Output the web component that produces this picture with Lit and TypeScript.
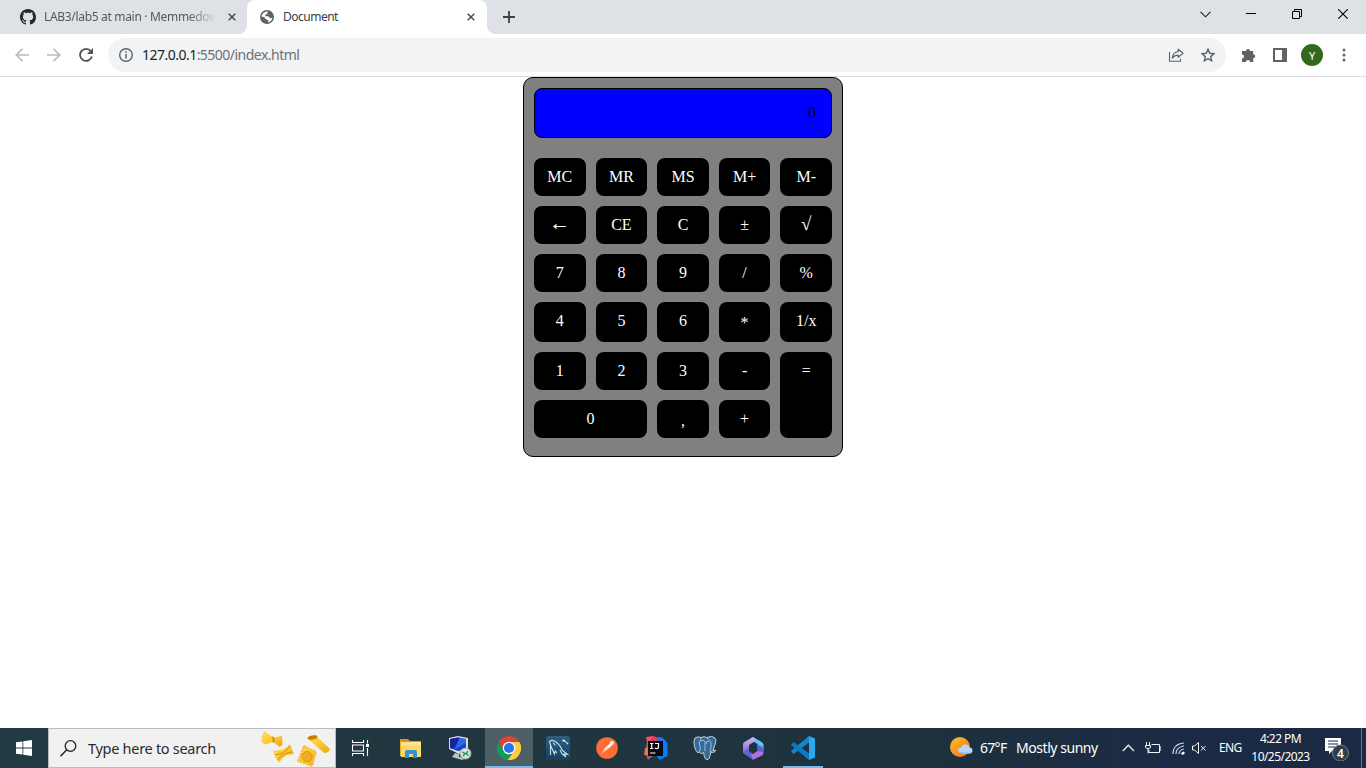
import { LitElement, html, css, svg } from "lit";
import { customElement } from "lit/decorators.js";
import { classMap } from "lit/directives/class-map.js";

const icon = (w: number, h: number, body: unknown) =>
  html`<svg width=${w} height=${h} viewBox="0 0 ${w} ${h}">${body}</svg>`;

const close = icon(8, 8, svg`<path d="M.7.7 7.3 7.3M7.3.7.7 7.3" stroke="#45494d" stroke-width="1.5"/>`);

const github = html`<svg width="16" height="16" viewBox="0 0 16 16"><path fill="#24292f" d="M8 0C3.58 0 0 3.58 0 8c0 3.54 2.29 6.53 5.47 7.59.4.07.55-.17.55-.38 0-.19-.01-.82-.01-1.49-2.01.37-2.53-.49-2.69-.94-.09-.23-.48-.94-.82-1.13-.28-.15-.68-.52-.01-.53.63-.01 1.08.58 1.23.82.72 1.21 1.87.87 2.33.66.07-.52.28-.87.51-1.07-1.78-.2-3.64-.89-3.64-3.95 0-.87.31-1.59.82-2.15-.08-.2-.36-1.02.08-2.12 0 0 .67-.21 2.2.82.64-.18 1.32-.27 2-.27s1.36.09 2 .27c1.53-1.04 2.2-.82 2.2-.82.44 1.1.16 1.92.08 2.12.51.56.82 1.27.82 2.15 0 3.07-1.87 3.75-3.65 3.95.29.25.54.73.54 1.48 0 1.07-.01 1.93-.01 2.2 0 .21.15.46.55.38A8.01 8.01 0 0 0 16 8c0-4.42-3.58-8-8-8z"/></svg>`;

const globe = icon(14, 14, svg`<circle cx="7" cy="7" r="7" fill="#5f6368"/>
  <path d="M8.200 1.500C6.400 2.500 8.300 3.600 6.700 4.300 5.200 4.900 5 4.800 5.300 6.200c1.900.2 3.800-.3 4.200 1.300.2 1.100 1.800.5 2.900.3-.3 2-1.800 4.200-4.200 4.700-.2-1.300.7-2.100-.6-2.700-1.700-.6-2.700-.5-2.800-2C4.700 7 3 6.700 1.500 6.500 1.800 3.900 4.500 1.200 8.200 1.500Z" fill="#fff"/>`);

const chrome = html`<svg width="24" height="24" viewBox="0 0 24 24">
  <path fill="#db4437" d="M12 0a12 12 0 0 1 10.400 6H12a6 6 0 0 0-5.200 9L1.600 6A12 12 0 0 1 12 0Z"/>
  <path fill="#0f9d58" d="M1.600 6 6.800 15a6 6 0 0 0 5.200 3 6 6 0 0 0 2-.3L10.600 24A12 12 0 0 1 1.600 6Z"/>
  <path fill="#ffcd40" d="M22.400 6a12 12 0 0 1-11.800 18l6.600-9A6 6 0 0 0 12 6Z"/>
  <circle cx="12" cy="12" r="6.300" fill="#fff"/><circle cx="12" cy="12" r="5.100" fill="#2b72e8"/></svg>`;

const explorer = icon(22, 19, svg`<path d="M0 0h8l2 2h11v3H0Z" fill="#d9941a"/><path d="M1 3h20v15H1Z" fill="#ffd968"/>
  <path d="M1 3h20v3H1Z" fill="#ffe391"/><path d="M5 19v-6q0-2 2-2h8q2 0 2 2v6h-4v-4H9v4Z" fill="#3390d9"/><path d="M0 2h1v15H0Z" fill="#e5ac34"/>`);

const remote = icon(24, 26, svg`<path d="m1 3 9-2 10 2v13l-9 3L1 14Z" fill="#d8e1e9"/><path d="m2 4 8-1.500 8 1.500v10l-8 2-8-3Z" fill="#1542cc"/>
  <path d="m2 4 8-1.500 3 .5L5 14l-3-1Z" fill="#17259f"/><path d="m11 3 7 1v4L7 14Z" fill="#3b7bed" opacity=".7"/>
  <path d="m7 18 4 1v3l7 1-4 2-10-3Z" fill="#b9c1c8"/><circle cx="17.500" cy="18.500" r="5.500" fill="#d9dfdc" stroke="#9da5a6"/>
  <path d="m14.500 17 2.500 1.700-2 2.500M20.500 20.500l-2.500-2 2-2.300" fill="none" stroke="#20933d" stroke-width="1.300"/>`);

const mysql = icon(24, 24, svg`<defs><linearGradient id="a" y2="1" x2="0"><stop stop-color="#325d7c"/><stop offset=".5" stop-color="#1d5179"/><stop offset="1" stop-color="#154064"/></linearGradient></defs>
  <rect width="24" height="24" rx="2.500" fill="url(#a)"/><path d="M4.500 19V9L3.500 5.500Q6 3.500 8.500 5q6 4 7.500 9l5.500 4.500-3.500-.5 2 3-4-3-2-4M4.500 9q2 5 4 9l.8-3 1.700 2M7 6.500l2.500 3" fill="none" stroke="#d1dfe9" stroke-width="1.100"/>
  <path d="m16 4 2-.5 2 2 2.500 2-1 1-2-2.500-2.500-.5Z" fill="#e7edf2"/>`);

const postman = icon(22, 22, svg`<circle cx="11" cy="11" r="10.800" fill="#ff6c37"/><path d="m5 17 4-6 5-4.500 2 2-5.500 4.500Z" fill="#fff"/><circle cx="15.800" cy="6" r="2.100" fill="#fff"/><path d="m5.500 16.500 6-6" stroke="#ff9270" stroke-width=".7"/>`);

const intellij = icon(24, 24, svg`<path d="m2 1 7-1 5 3-5 7-7 2 1-6Z" fill="#fc4c60"/><path d="m9 0 6 2-5 8H3Z" fill="#e43870"/><path d="m14 1 5 1 4.500 5v13l-8 4-3-4Z" fill="#087cfa"/><path d="m15 1 4 1v7h-6Z" fill="#3e6be9"/><path d="m1 17 5-7 4 9-6 5Z" fill="#a85398"/><path d="m1 12 5-1v8H0Z" fill="#ef7446"/>
  <rect x="4" y="5" width="15" height="15" fill="#080808"/><path d="M6 7.500h3.400M7.700 7.500v5M6 12.500h3.400M11 7.500h3.500v3.700q0 1.400-1.700 1.400-1.200 0-1.700-.6M6 17h5.500" stroke="#fff" stroke-width="1.200" fill="none"/>`);

const postgres = icon(24, 25, svg`<path d="M2 2q3-2 6-.5 3-1.500 6 0 5-2.500 8 .5 2 3-1 9l-1 3.500 3-.2q-1 2.500-5.500 2.200Q17 24 14 23.500q-3 0-3.200-7-2 2.500-4.500-.2Q3 18 1.500 10 0 5 2 2Z" fill="#336b9c" stroke="#c6ced4" stroke-width="1"/>
  <path d="M8 2Q5 7 7 11q1 3-1 5M14 2q5 3 4 9l-1 4 2 1M8 5q3-2 4 1v9M16 5q-3 0-3 3" stroke="#c8d2da" stroke-width=".8" fill="none"/>`);

const office = icon(21, 23, svg`<defs><linearGradient id="b" x1="0" y1="0" x2="0" y2="1"><stop stop-color="#d6b9f6"/><stop offset="1" stop-color="#7d51c9"/></linearGradient><linearGradient id="c" x2="1" y1="1" y2="0"><stop stop-color="#4a55c8"/><stop offset=".6" stop-color="#55d1ff"/></linearGradient></defs>
  <path d="m10 0 9 5.200 1.500 2V12l-6-3V7L8 3.500Z" fill="url(#c)"/><path d="m10 0-9 5.200L0 7v9l6 3V8l7-4.500Z" fill="url(#b)"/><path d="m0 15 2 2.500 8 5.200 4-2.700-8-6v-3Z" fill="#5b64d8"/><path d="M20.500 10v6.500L19 18.500l-9 4.200-2-4.700 6.500-4V8Z" fill="#ad72df"/><path d="m14.500 8 6 3v4l-6-1Z" fill="#5960cd"/>`);

const vscode = icon(24, 24, svg`<path d="m18 0-18 15 2.500 3L18 6.500Z" fill="#1685d0"/><path d="M18 24 0 9l2.500-3L18 17.500Z" fill="#087dc6"/><path d="M18 0v24l6-2.500v-19Z" fill="#29a9ef"/>`);

const pasta = html`<svg width="72" height="38" viewBox="0 0 72 38">
  <defs><linearGradient id="p" x2="1" y2="1"><stop stop-color="#ffdd5c"/><stop offset=".55" stop-color="#fbc62f"/><stop offset="1" stop-color="#eea51c"/></linearGradient></defs>
  <path d="m4 2 8 5.500Q14 10 16 8l6-1 .5 9-3 2-6-5q-2-1-3 1l-6 1.500-3.500-3.500 2-2-2-2 2-2Z" fill="url(#p)"/><path d="m12 8q3 2 1 5.500" stroke="#d68d06" stroke-width="2" fill="none"/>
  <path d="m13 22 7-1q6-1 10-6l4 10-7 1q-4 2-8 7.500l-3-4Z" fill="url(#p)"/><path d="M15 26q10-1 15-9M18 31q4-7 14-8" stroke="#d68d06" stroke-width="1" fill="none"/>
  <path d="M48 10q1-5 8-3l14 13q-1 4-6 4Z" fill="url(#p)"/><ellipse cx="52.500" cy="8.500" rx="5" ry="2" fill="#c97a00" transform="rotate(-12 52.500 8.500)"/>
  <path d="m44 17 12 6-4 14-14-5Z" fill="url(#p)" stroke="#f6bd36" stroke-width="2" stroke-dasharray="2.500 1" stroke-linejoin="round"/><circle cx="47" cy="27.500" r="5" fill="#efae25" stroke="#d99412"/></svg>`;

const weather = icon(24, 22, svg`<defs><linearGradient id="s" x2="1" y2="1"><stop stop-color="#ffc12c"/><stop offset="1" stop-color="#f26d19"/></linearGradient></defs><circle cx="10" cy="10" r="10" fill="url(#s)"/><path d="M12 16.500q-4 0-4-3 0-2.500 3-3 2-4 5.500-3 2.500.5 3 3 3 0 3 3t-3 3Z" fill="#b9d3fa"/><path d="M12 16.500q-3 0-4-2 6 2 14 .5-1 1.500-2 1.500Z" fill="#91b7ee"/>`);

@customElement("browser-window")
class BrowserWindow extends LitElement {
  static styles = css`
    :host { display: block; font-family: "Noto Sans", sans-serif; color: #3c4043; }
    svg { display: block; flex: none; }
    .tabs { display: flex; height: 34px; background: #dee1e6; }
    .tab { display: flex; align-items: center; box-sizing: border-box; font-size: 12px; }
    .idle { width: 247px; padding-left: 20px; }
    .label { white-space: nowrap; overflow: hidden; line-height: 18px; }
    .idle .label { width: 172px; margin: 0 12px 0 8px; color: #54585d; letter-spacing: -.32px;
      -webkit-mask-image: linear-gradient(90deg, #000 84%, transparent); }
    .active { width: 240px; padding-left: 13px; background: #fff; border-radius: 8px 8px 0 0; position: relative; }
    .active::before, .active::after { content: ""; position: absolute; bottom: 0; width: 8px; height: 8px; }
    .active::before { left: -8px; background: radial-gradient(circle at 0 0, transparent 7.5px, #fff 8px); }
    .active::after { right: -8px; background: radial-gradient(circle at 100% 0, transparent 7.5px, #fff 8px); }
    .active .label { width: 160px; margin: 0 24px 0 9px; letter-spacing: -.5px; }
    .plus { display: grid; place-items: center; width: 44px; }
    .controls { display: flex; margin-left: auto; height: 28px; }
    .controls > * { width: 46px; display: grid; place-items: center; }
    .bar { display: flex; align-items: center; height: 42px; padding: 0 6px; border-bottom: 1px solid #dadce0; background: #fff; }
    .cell { width: 32px; height: 32px; display: grid; place-items: center; flex: none; }
    .omni { display: flex; align-items: center; flex: 1; height: 34px; margin: 0 6px; padding: 0 2px 0 11px; box-sizing: border-box; border-radius: 17px; background: #f1f3f4; }
    .url { flex: 1; margin-left: 9px; font-size: 14px; line-height: 20px; letter-spacing: -.52px; color: #6c7075; }
    .url b { font-weight: 400; color: #202124; }
    .avatar { width: 22px; height: 22px; border-radius: 50%; background: #33691e; color: #fff; display: grid; place-items: center; font-size: 11px; }
  `;
  render() {
    return html`
      <div class="tabs">
        <div class="tab idle">${github}<span class="label">LAB3/lab5 at main · Memmedov</span>${close}</div>
        <div class="tab active">${globe}<span class="label">Document</span>${close}</div>
        <div class="plus">${icon(12, 12, svg`<path d="M6 0v12M0 6h12" stroke="#3c4043" stroke-width="1.800"/>`)}</div>
        <div class="controls">
          <span>${icon(11, 7, svg`<path d="m.5.8 5 5 5-5" fill="none" stroke="#222" stroke-width="1.100"/>`)}</span>
          <span>${icon(10, 2, svg`<path d="M0 0h10v1H0z"/>`)}</span>
          <span>${icon(10, 10, svg`<path d="M.5 2.500h7v7h-7zM2.500 2.500v-2h7v7h-2" fill="none" stroke="#000"/>`)}</span>
          <span>${icon(10, 10, svg`<path d="m.2.2 9.600 9.600m0-9.600-9.600 9.600" stroke="#000" stroke-width="1.100"/>`)}</span>
        </div>
      </div>
      <div class="bar">
        <span class="cell">${icon(14, 14, svg`<path d="M14 7H1.500M7.500.8 1.300 7l6.200 6.200" fill="none" stroke="#b9bbbe" stroke-width="1.700"/>`)}</span>
        <span class="cell">${icon(14, 14, svg`<path d="M0 7h12.500M6.500.8 12.700 7l-6.200 6.200" fill="none" stroke="#b9bbbe" stroke-width="1.700"/>`)}</span>
        <span class="cell">${icon(14, 14, svg`<path d="M11.800 3.200A6 6 0 1 0 12.900 8.500" fill="none" stroke="#4e5256" stroke-width="1.800"/><path d="M14 0v6H8Z" fill="#4e5256"/>`)}</span>
        <div class="omni">
          ${icon(14, 14, svg`<circle cx="7" cy="7" r="6.300" fill="none" stroke="#5f6368" stroke-width="1.400"/><path d="M7 6v4.500M7 3.300v1.500" stroke="#5f6368" stroke-width="1.500"/>`)}
          <span class="url"><b>127.0.0.1</b>:5500/index.html</span>
          <span class="cell">${icon(16, 14, svg`<path d="M1.500 4v9.300h11v-2.500" fill="none" stroke="#5f6368" stroke-width="1.100"/><path d="M10.200 1.200 15 5.300l-4.800 4.100V7.200Q6.700 7 4.200 10 4.800 4.300 10.200 3.500Z" fill="none" stroke="#5f6368" stroke-width="1.200" stroke-linejoin="round"/>`)}</span>
          <span class="cell">${icon(14, 14, svg`<path d="m7 1.300 1.700 4 4.300.4-3.300 2.900 1 4.200L7 10.600l-3.700 2.200 1-4.200L1 5.700l4.300-.4Z" fill="none" stroke="#5f6368" stroke-width="1.400"/>`)}</span>
        </div>
        <span class="cell">${icon(15, 15, svg`<path d="M1.500 3H5a2 2 0 1 1 4 0h3.200v3.300a2 2 0 1 1 0 4V14H9a2 2 0 0 0-4 0H1v-3.500a2 2 0 0 0 0-4V3Z" fill="#5f6368"/>`)}</span>
        <span class="cell">${icon(14, 14, svg`<path d="M0 0h14v14H0Zm2 2v10h7V2Z" fill="#5f6368" fill-rule="evenodd"/>`)}</span>
        <span class="cell"><span class="avatar">Y</span></span>
        <span class="cell">${icon(4, 14, svg`<g fill="#5f6368"><circle cx="2" cy="2" r="1.500"/><circle cx="2" cy="7" r="1.500"/><circle cx="2" cy="12" r="1.500"/></g>`)}</span>
      </div>`;
  }
}

@customElement("calculator-pad")
class CalculatorPad extends LitElement {
  static styles = css`
    :host { display: block; width: 320px; height: 380px; box-sizing: border-box; padding: 10px; margin: 0 auto;
      border: 1px solid #000; border-radius: 10px; background: gray; font: 16px/18px "Liberation Serif", serif; }
    .display { height: 50px; box-sizing: border-box; padding: 15px 15px 0 0; margin-bottom: 20px; border: 1px solid #000;
      border-radius: 8px; background: blue; text-align: right; color: #000; }
    .keys { display: grid; grid-template-columns: repeat(5, 1fr); grid-template-rows: 38px 38px 38px 40px 38px 38px; gap: 10px; }
    .key { padding-top: 10px; border-radius: 8px; background: #000; color: #fff; text-align: center; }
    .wide { grid-column: span 2; }
    .tall { grid-row: span 2; }
    .arrow { font-size: 21px; padding-top: 8px; }
    .root { font-size: 19px; padding-top: 9px; }
    .low { padding-top: 12px; }
  `;
  keys = ["MC", "MR", "MS", "M+", "M-", "←", "CE", "C", "±", "√", "7", "8", "9", "/", "%", "4", "5", "6", "*", "1/x", "1", "2", "3", "-", "=", "0", ",", "+"];
  render() {
    return html`<div class="display">0</div>
      <div class="keys">${this.keys.map((k) => html`<div class=${classMap({ key: true, wide: k === "0", tall: k === "=", arrow: k === "←", root: k === "√", low: k === "*" || k === "," })}>${k}</div>`)}</div>`;
  }
}

@customElement("task-bar")
class TaskBar extends LitElement {
  static styles = css`
    :host { display: flex; height: 40px; color: #fff; font-family: "Noto Sans", sans-serif;
      background: linear-gradient(90deg, #223a42 0, #20363f 45%, #1d303d 70%, #1b2b45 85%, #1b2944 100%); }
    svg { display: block; flex: none; }
    .start { width: 48px; display: grid; place-items: center; }
    .search { width: 288px; box-sizing: border-box; border: 1px solid #bcbcbc; background: #f1f1f1; color: #2b2b2b; display: flex; align-items: center; padding: 0 3px 0 11px; }
    .hint { flex: 1; margin-left: 11px; font-size: 14.500px; line-height: 20px; letter-spacing: -.29px; white-space: nowrap; }
    .view { width: 48px; margin-right: 2px; display: grid; place-items: center; }
    .app { width: 49px; display: grid; place-items: center; box-sizing: border-box; }
    .current { width: 48px; margin-left: 1px; background: #4c5e66; box-shadow: inset 0 -2px #76b9ed; }
    .running { width: 40px; margin-left: 5px; box-shadow: inset 0 -2px #76b9ed; }
    .tray { display: flex; align-items: center; margin-left: auto; font-size: 14px; line-height: 20px; white-space: nowrap; }
    .temp { width: 36px; margin-left: 6px; letter-spacing: -.7px; }
    .sky { width: 106px; letter-spacing: -.45px; }
    .up { width: 23px; }
    .power { width: 27px; }
    .wifi { width: 20px; }
    .sound { width: 27px; }
    .lang { width: 24px; font-size: 12px; letter-spacing: -.6px; }
    .clock { width: 75px; margin-right: 1px; font-size: 12px; line-height: 18px; letter-spacing: -.55px; text-align: center; }
    .note { width: 42px; padding-left: 6px; box-sizing: border-box; }
    .edge { width: 1px; height: 40px; margin-right: 4px; background: #687284; }
  `;
  render() {
    const apps: [unknown, string][] = [[explorer, ""], [remote, ""], [chrome, "current"], [mysql, ""], [postman, ""], [intellij, ""], [postgres, ""], [office, ""], [vscode, "running"]];
    return html`
      <div class="start">${icon(16, 16, svg`<path fill="#fff" d="m0 2.300 6.500-.9v6.200H0ZM7.300 1.300 16 0v7.600H7.300ZM0 8.400h6.500v6.200L0 13.700ZM7.300 8.400H16V16l-8.700-1.300Z"/>`)}</div>
      <div class="search">
        ${icon(17, 17, svg`<circle cx="10.500" cy="6" r="5.300" fill="none" stroke="#222" stroke-width="1.300"/><path d="m6.700 9.800-6.200 6.400" stroke="#222" stroke-width="1.500"/>`)}
        <span class="hint">Type here to search</span>${pasta}
      </div>
      <div class="view">${icon(17, 16, svg`<g fill="none" stroke="#fff" stroke-width="1.100"><path d="M.500 0v2.500h11V0M.500 5h11v6H.500zM.500 16v-2.500h11V16M15.500 0v3.500M15.500 8v8"/></g><path d="M14 4h3v3h-3z" fill="#fff"/>`)}</div>
      ${apps.map(([glyph, state]) => html`<div class=${classMap({ app: true, current: state === "current", running: state === "running" })}>${glyph}</div>`)}
      <div class="tray">
        ${weather}<span class="temp">67°F</span><span class="sky">Mostly sunny</span>
        <span class="up">${icon(13, 8, svg`<path d="m.8 7 5.500-5.800L12 7" fill="none" stroke="#eee" stroke-width="1.300"/>`)}</span>
        <span class="power">${icon(16, 12, svg`<path d="M6.500 2.500h8v8H4V8M14.500 5H16v3h-1.500M1.500 0v3M4.500 0v3M.500 3.500h5v2q-2.500 3-5 0zM3 6v5.500" fill="none" stroke="#f4f4f4"/>`)}</span>
        <span class="wifi">${icon(13, 13, svg`<g fill="none" stroke="#ced4dc" stroke-width="1.200"><path d="M1 12Q1 2 12 1M4 12q0-7 8-8M7 12q0-4 5-5"/></g><path d="M9.500 12q0-2 2.500-2v2z" fill="#fff" stroke="#fff"/>`)}</span>
        <span class="sound">${icon(15, 12, svg`<path d="M.500 4h2l4-3.500v11L2.500 8h-2zM9 4l4.500 4.500M13.500 4 9 8.500" fill="none" stroke="#f4f4f4"/>`)}</span>
        <span class="lang">ENG</span>
        <div class="clock">4:22 PM<br />10/25/2023</div>
        <span class="note"><svg width="26" height="26" viewBox="0 0 26 26"><path d="M0 3h16v13H7l-3 3v-3H0Z" fill="#fff"/><path d="M3 6h10M3 9h10M3 12h7" stroke="#1b2944"/><circle cx="15.500" cy="18" r="8" fill="#363c45" stroke="#737a83"/><text x="15.500" y="22.500" text-anchor="middle" fill="#fff" font-size="12" font-weight="600">4</text></svg></span>
        <span class="edge"></span>
      </div>`;
  }
}

@customElement("app-root")
class AppRoot extends LitElement {
  static styles = css`
    :host { display: flex; flex-direction: column; width: 1366px; height: 768px; overflow: hidden; background: #fff; }
    .page { flex: 1; }
  `;
  render() {
    return html`<browser-window></browser-window><main class="page"><calculator-pad></calculator-pad></main><task-bar></task-bar>`;
  }
}
